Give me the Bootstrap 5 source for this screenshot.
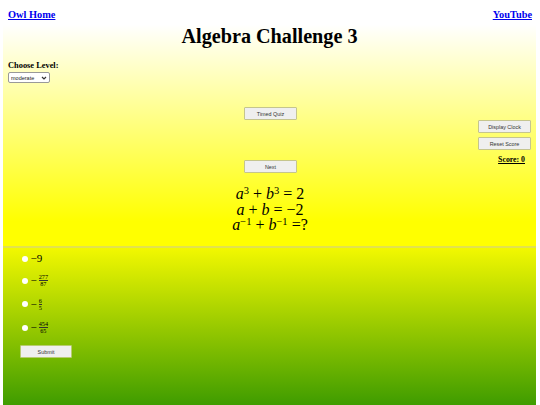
<!DOCTYPE html>
<html lang="en">
<head>
<meta charset="utf-8">
<title>Algebra Challenge 3</title>
<link href="https://cdn.jsdelivr.net/npm/bootstrap@5.3.0/dist/css/bootstrap.min.css" rel="stylesheet">
<style>
html, body { height: 405px; overflow: hidden; }
body { background: #fff; font-family: "Liberation Serif", serif; color: #000; }
.page-wrap { height: 405px; margin: 0 4px 0 3px; }
.upper-part { height: 246px; padding: 0 4px; background: linear-gradient(to bottom, #fff 10%, #ff0 90%); }
.lower-part { height: 159px; padding: 0 4px; border-top: 2px solid #e2e24e; background: linear-gradient(to bottom, #f2f800 0%, #3f9c00 100%); }
.top-link { font-size: 10.35px; font-weight: 700; color: #0000ee; line-height: 13px; }
.top-bar { padding: 8px 0 0 1px; }
.heading { font-size: 20.2px; font-weight: 700; line-height: 28px; margin: 1px 0 0; text-align: center; }
.level-wrap { padding-left: 1px; }
.level-label { font-size: 8.4px; font-weight: 700; line-height: 12px; margin-top: 10px; }
.level-select { display: block; appearance: none; width: 42px; height: 11px; font: 5.5px "Liberation Sans", sans-serif; margin: 0; padding: 0 0 0 2px; border: 1px solid #999; border-radius: 2px; color: #222; background: #fff url("data:image/svg+xml,%3Csvg xmlns='http://www.w3.org/2000/svg' width='6' height='4'%3E%3Cpath d='M1 1l2 2 2-2' fill='none' stroke='%23333' stroke-width='1.2'/%3E%3C/svg%3E") no-repeat right 2px center; }
.quiz-btn { font: 5.4px "Liberation Sans", sans-serif; background: #efefef; border: 1px solid #c5c58e; border-radius: 1px; color: #333; padding: 0; height: 13px; width: 53px; }
.mid-zone { height: 77px; position: relative; padding: 24px 0 0 2px; display: flex; flex-direction: column; align-items: center; }
.side-tools { position: absolute; right: 1px; top: 37px; display: flex; flex-direction: column; align-items: flex-end; gap: 4px; }
.score-txt { font-size: 7.8px; font-weight: 700; text-decoration: underline; line-height: 10px; margin: 1px 6px 0 0; }
.next-row { display: flex; justify-content: center; padding-left: 2px; }
.math-block { font-size: 16px; line-height: 15.5px; text-align: center; margin-top: 13px; padding-left: 1px; }
.math-block i { font-style: italic; }
.math-block sup { font-size: 10.5px; top: -.45em; line-height: 0; }
.choice-list { padding-left: 14.5px; }
.choice-row { display: flex; align-items: center; gap: 3px; font-size: 11px; height: 23px; }
.choice-row:first-child { height: 21px; }
.choice-row:nth-child(3) { height: 24px; }
.choice-row input { appearance: none; width: 6px; height: 6px; border-radius: 50%; background: #fff; margin: 0; }
.ans-math { display: flex; align-items: center; gap: 2px; }
.frac { display: inline-flex; flex-direction: column; align-items: center; font-size: 6.2px; line-height: 6px; }
.frac span:first-child { border-bottom: 1px solid #333; padding-bottom: 0; }
.submit-btn { display: block; font: 5.4px "Liberation Sans", sans-serif; background: #efefef; border: 1px solid #b8cc70; border-radius: 1px; color: #333; width: 52px; height: 13px; padding: 0; margin: 6px 0 0 13px; }
</style>
</head>
<body>
<div class="page-wrap">
  <div class="upper-part">
    <div class="top-bar d-flex justify-content-between">
      <a class="top-link" href="#">Owl Home</a>
      <a class="top-link" href="#">YouTube</a>
    </div>
    <h1 class="heading">Algebra Challenge 3</h1>
    <div class="level-wrap">
      <div class="level-label">Choose Level:</div>
      <select class="level-select" aria-label="Choose Level"><option>moderate</option></select>
    </div>
    <div class="mid-zone">
      <button class="quiz-btn" type="button">Timed Quiz</button>
      <div class="side-tools">
        <button class="quiz-btn" type="button">Display Clock</button>
        <button class="quiz-btn" type="button">Reset Score</button>
        <div class="score-txt">Score: 0</div>
      </div>
    </div>
    <div class="next-row"><button class="quiz-btn" type="button">Next</button></div>
    <div class="math-block">
      <div><i>a</i><sup>3</sup> + <i>b</i><sup>3</sup> = 2</div>
      <div><i>a</i> + <i>b</i> = −2</div>
      <div><i>a</i><sup>−1</sup> + <i>b</i><sup>−1</sup> =?</div>
    </div>
  </div>
  <div class="lower-part">
    <div class="choice-list">
      <label class="choice-row"><input type="radio" name="ans"><span class="ans-math">−9</span></label>
      <label class="choice-row"><input type="radio" name="ans"><span class="ans-math">− <span class="frac"><span>277</span><span>87</span></span></span></label>
      <label class="choice-row"><input type="radio" name="ans"><span class="ans-math">− <span class="frac"><span>6</span><span>5</span></span></span></label>
      <label class="choice-row"><input type="radio" name="ans"><span class="ans-math">− <span class="frac"><span>454</span><span>65</span></span></span></label>
    </div>
    <button class="submit-btn" type="button">Submit</button>
  </div>
</div>
<script src="https://cdn.jsdelivr.net/npm/bootstrap@5.3.0/dist/js/bootstrap.bundle.min.js"></script>
</body>
</html>
